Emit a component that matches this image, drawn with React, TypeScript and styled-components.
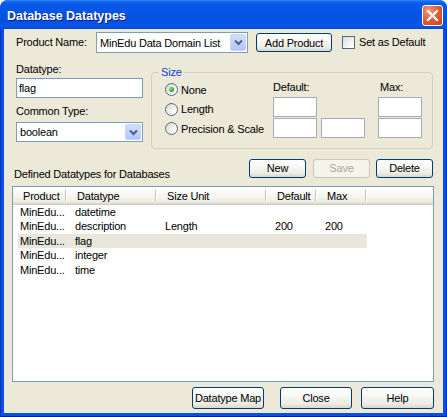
import React from "react";
import styled, { createGlobalStyle } from "styled-components";

const Global = createGlobalStyle`
  html, body { margin: 0; padding: 0; background: #ffffff; }
  body { font-family: "Liberation Sans", Arial, sans-serif; font-size: 11px; color: #000; letter-spacing: -0.2px; }
  * { box-sizing: border-box; }
`;

const Window = styled.div`
  width: 447px;
  height: 417px;
  display: flex;
  flex-direction: column;
  border-radius: 8px 8px 0 0;
  overflow: hidden;
  background: #0a4fdf;
`;

const TitleBar = styled.div`
  height: 29px;
  flex: none;
  display: flex;
  justify-content: space-between;
  align-items: flex-start;
  padding: 0 4px 0 7px;
  background: linear-gradient(
    180deg,
    #3d8cf7 0%,
    #1a6cf5 4%,
    #0a5ae9 12%,
    #0654e4 45%,
    #0552e2 75%,
    #0a56e6 90%,
    #0847d3 100%
  );
`;

const Title = styled.div`
  padding-top: 9px;
  color: #ffffff;
  font-weight: bold;
  font-size: 12.5px;
  letter-spacing: 0;
  text-shadow: 1px 1px 0 #0a1a8a;
`;

const CloseButton = styled.div`
  margin-top: 5px;
  width: 21px;
  height: 21px;
  border: 1px solid #ffffff;
  border-radius: 3px;
  background: radial-gradient(circle at 30% 25%, #f19a7e 0%, #e2603f 45%, #c9401d 100%);
  display: flex;
  align-items: center;
  justify-content: center;
`;

const Frame = styled.div`
  flex: 1;
  display: flex;
  padding: 0 4px 4px;
  background: #0a4fdf;
  box-shadow: inset 1px 0 #0630c0, inset -1px 0 #0630c0, inset 0 -1px #00208f;
`;

const Client = styled.div`
  flex: 1;
  display: flex;
  flex-direction: column;
  background: #ece9d8;
  padding: 3px 9px 4px 8px;
`;

const TopRow = styled.div`
  display: flex;
  align-items: center;
  height: 21px;
  padding-left: 4px;
`;

const Label = styled.span<{ $w?: number }>`
  display: block;
  line-height: 13px;
  white-space: nowrap;
  ${(p) => (p.$w ? `width: ${p.$w}px; flex: none;` : "")}
`;

const Combo = styled.div<{ $w: number; $h: number }>`
  width: ${(p) => p.$w}px;
  height: ${(p) => p.$h}px;
  flex: none;
  display: flex;
  align-items: stretch;
  border: 1px solid #7f9db9;
  background: #ffffff;
`;

const ComboText = styled.span`
  flex: 1;
  align-self: center;
  padding-left: 3px;
  white-space: nowrap;
  overflow: hidden;
`;

const ComboArrow = styled.span`
  width: 16px;
  margin: 1px;
  border-radius: 2px;
  border: 1px solid #c6d5f9;
  background: linear-gradient(180deg, #d3defc 0%, #c2d2fb 50%, #b2c6f6 100%);
  display: flex;
  align-items: center;
  justify-content: center;
`;

const Button = styled.div<{ $w: number; $h: number; $disabled?: boolean; $ml?: number }>`
  width: ${(p) => p.$w}px;
  height: ${(p) => p.$h}px;
  flex: none;
  margin-left: ${(p) => p.$ml ?? 0}px;
  display: flex;
  align-items: center;
  justify-content: center;
  white-space: nowrap;
  border-radius: 3px;
  border: 1px solid ${(p) => (p.$disabled ? "#c9c7ba" : "#003c74")};
  color: ${(p) => (p.$disabled ? "#aca899" : "#000000")};
  background: ${(p) =>
    p.$disabled
      ? "#f5f4ea"
      : "linear-gradient(180deg, #ffffff 0%, #f7f7f3 40%, #ecebe4 80%, #d9d5c9 100%)"};
`;

const CheckWrap = styled.div`
  display: flex;
  align-items: center;
  gap: 4px;
  margin-left: 10px;
`;

const CheckBox = styled.span`
  width: 13px;
  height: 13px;
  flex: none;
  border: 1px solid #4e6a8a;
  background: linear-gradient(135deg, #dcdcd7 0%, #f4f4f0 60%, #ffffff 100%);
`;

const MidRow = styled.div`
  display: flex;
  align-items: flex-start;
  gap: 8px;
  margin-top: 8px;
  padding-left: 4px;
`;

const LeftCol = styled.div`
  width: 127px;
  flex: none;
  display: flex;
  flex-direction: column;
  padding-top: 2px;
`;

const TextBox = styled.div<{ $h?: number }>`
  height: ${(p) => p.$h ?? 20}px;
  border: 1px solid #7f9db9;
  background: #ffffff;
  display: flex;
  align-items: center;
  padding-left: 2px;
`;

const Spacer = styled.div<{ $h: number }>`
  height: ${(p) => p.$h}px;
  flex: none;
`;

const Group = styled.fieldset`
  width: 282px;
  flex: none;
  margin: 5px 0 0 0;
  padding: 0 10px 9px 7px;
  border: 1px solid #d0d0bf;
  border-radius: 4px;
  min-width: 0;
`;

const Legend = styled.legend`
  padding: 0 2px;
  margin: 0;
  line-height: 13px;
  color: #0046d5;
`;

const GroupBody = styled.div`
  display: flex;
  align-items: flex-start;
  padding-left: 6px;
`;

const RadioCol = styled.div`
  width: 108px;
  flex: none;
  display: flex;
  flex-direction: column;
  padding-top: 1px;
`;

const RadioRow = styled.div`
  height: 19.5px;
  display: flex;
  align-items: center;
  gap: 3px;
  white-space: nowrap;
`;

const RadioDot = styled.span<{ $checked?: boolean }>`
  width: 13px;
  height: 13px;
  flex: none;
  border-radius: 50%;
  border: 1px solid #4e6a8a;
  background: linear-gradient(135deg, #d6d6d0 0%, #f2f2ee 55%, #ffffff 100%);
  display: flex;
  align-items: center;
  justify-content: center;
  &::after {
    content: "";
    display: ${(p) => (p.$checked ? "block" : "none")};
    width: 5px;
    height: 5px;
    border-radius: 50%;
    background: radial-gradient(circle at 35% 35%, #8ee88e 0%, #3cb33c 50%, #1d8f1d 100%);
  }
`;

const InputsGrid = styled.div`
  display: grid;
  grid-template-columns: 44px 4px 44px 13px 44px;
  grid-template-rows: auto 20px 20px;
  row-gap: 1px;
  padding-top: 2px;
`;

const GridLabel = styled.span<{ $col: number; $ml?: number }>`
  grid-row: 1;
  grid-column: ${(p) => p.$col};
  line-height: 13px;
  margin-bottom: 2px;
  margin-left: ${(p) => p.$ml ?? 0}px;
  white-space: nowrap;
`;

const GridInput = styled.div<{ $row: number; $col: number }>`
  grid-row: ${(p) => p.$row};
  grid-column: ${(p) => p.$col};
  border: 1px solid #a5acb2;
  background: #ffffff;
`;

const ListBar = styled.div`
  display: flex;
  align-items: flex-start;
  height: 19px;
  margin-top: 10px;
  padding: 0 1px 0 2px;
`;

const ListBarLabel = styled.span`
  flex: 1;
  margin-top: 9px;
  line-height: 13px;
  white-space: nowrap;
`;

const List = styled.div`
  flex: 1;
  min-height: 0;
  margin-top: 8px;
  border: 1px solid #7f9db9;
  background: #ffffff;
  display: flex;
  flex-direction: column;
  overflow: hidden;
`;

const Header = styled.div`
  height: 18px;
  flex: none;
  display: flex;
  background: linear-gradient(180deg, #ffffff 0%, #f6f5ef 50%, #eeede4 80%, #e2ded3 90%, #cbc7b8 100%);
`;

const HeaderCell = styled.div<{ $w: number }>`
  width: ${(p) => p.$w}px;
  flex: none;
  position: relative;
  display: flex;
  align-items: center;
  padding-left: 10px;
  white-space: nowrap;
  &::after {
    content: "";
    position: absolute;
    right: 1px;
    top: 3px;
    bottom: 4px;
    width: 1px;
    background: #c7c5b2;
    box-shadow: 1px 0 0 #ffffff;
  }
`;

const Rows = styled.div`
  display: flex;
  flex-direction: column;
`;

const Row = styled.div<{ $selected?: boolean }>`
  display: grid;
  grid-template-columns: 49px 90px 110px 50px 50px;
  margin-left: 5px;
  width: 349px;
  height: 14.5px;
  line-height: 14.5px;
  background: ${(p) => (p.$selected ? "#e9e6dc" : "transparent")};
`;

const Cell = styled.span<{ $first?: boolean }>`
  padding-left: ${(p) => (p.$first ? 2 : 8)}px;
  white-space: nowrap;
  overflow: hidden;
`;

const BottomRow = styled.div`
  display: flex;
  justify-content: flex-end;
  margin-top: 5px;
`;

const Chevron = () => (
  <svg width="9" height="7" viewBox="0 0 9 7">
    <path d="M1 1.5 L4.5 5 L8 1.5" fill="none" stroke="#4d6185" strokeWidth="2" />
  </svg>
);

const CloseX = () => (
  <svg width="13" height="13" viewBox="0 0 13 13">
    <path d="M2 2 L11 11 M11 2 L2 11" stroke="#ffffff" strokeWidth="2.2" strokeLinecap="square" />
  </svg>
);

const rows = [
  { product: "MinEdu...", type: "datetime", unit: "", def: "", max: "" },
  { product: "MinEdu...", type: "description", unit: "Length", def: "200", max: "200" },
  { product: "MinEdu...", type: "flag", unit: "", def: "", max: "", selected: true },
  { product: "MinEdu...", type: "integer", unit: "", def: "", max: "" },
  { product: "MinEdu...", type: "time", unit: "", def: "", max: "" },
];

export default function App() {
  return (
    <>
      <Global />
      <Window>
        <TitleBar>
          <Title>Database Datatypes</Title>
          <CloseButton>
            <CloseX />
          </CloseButton>
        </TitleBar>
        <Frame>
          <Client>
            <TopRow>
              <Label $w={80}>Product Name:</Label>
              <Combo $w={152} $h={21}>
                <ComboText>MinEdu Data Domain List</ComboText>
                <ComboArrow>
                  <Chevron />
                </ComboArrow>
              </Combo>
              <Button $w={76} $h={19} $ml={8}>
                Add Product
              </Button>
              <CheckWrap>
                <CheckBox />
                <Label>Set as Default</Label>
              </CheckWrap>
            </TopRow>

            <MidRow>
              <LeftCol>
                <Label>Datatype:</Label>
                <Spacer $h={2} />
                <TextBox>flag</TextBox>
                <Spacer $h={7} />
                <Label>Common Type:</Label>
                <Spacer $h={4} />
                <Combo $w={127} $h={20}>
                  <ComboText>boolean</ComboText>
                  <ComboArrow>
                    <Chevron />
                  </ComboArrow>
                </Combo>
              </LeftCol>
              <Group>
                <Legend>Size</Legend>
                <GroupBody>
                  <RadioCol>
                    <RadioRow>
                      <RadioDot $checked />
                      None
                    </RadioRow>
                    <RadioRow>
                      <RadioDot />
                      Length
                    </RadioRow>
                    <RadioRow>
                      <RadioDot />
                      Precision &amp; Scale
                    </RadioRow>
                  </RadioCol>
                  <InputsGrid>
                    <GridLabel $col={1}>Default:</GridLabel>
                    <GridLabel $col={5} $ml={2}>
                      Max:
                    </GridLabel>
                    <GridInput $row={2} $col={1} />
                    <GridInput $row={2} $col={5} />
                    <GridInput $row={3} $col={1} />
                    <GridInput $row={3} $col={3} />
                    <GridInput $row={3} $col={5} />
                  </InputsGrid>
                </GroupBody>
              </Group>
            </MidRow>

            <ListBar>
              <ListBarLabel>Defined Datatypes for Databases</ListBarLabel>
              <Button $w={57} $h={19}>
                New
              </Button>
              <Button $w={57} $h={19} $ml={7} $disabled>
                Save
              </Button>
              <Button $w={57} $h={19} $ml={6}>
                Delete
              </Button>
            </ListBar>

            <List>
              <Header>
                <HeaderCell $w={54}>Product</HeaderCell>
                <HeaderCell $w={90}>Datatype</HeaderCell>
                <HeaderCell $w={110}>Size Unit</HeaderCell>
                <HeaderCell $w={50}>Default</HeaderCell>
                <HeaderCell $w={50}>Max</HeaderCell>
              </Header>
              <Rows>
                {rows.map((r) => (
                  <Row key={r.type} $selected={r.selected}>
                    <Cell $first>{r.product}</Cell>
                    <Cell>{r.type}</Cell>
                    <Cell>{r.unit}</Cell>
                    <Cell>{r.def}</Cell>
                    <Cell>{r.max}</Cell>
                  </Row>
                ))}
              </Rows>
            </List>

            <BottomRow>
              <Button $w={72} $h={22}>
                Datatype Map
              </Button>
              <Button $w={72} $h={22} $ml={16}>
                Close
              </Button>
              <Button $w={73} $h={22} $ml={9}>
                Help
              </Button>
            </BottomRow>
          </Client>
        </Frame>
      </Window>
    </>
  );
}
